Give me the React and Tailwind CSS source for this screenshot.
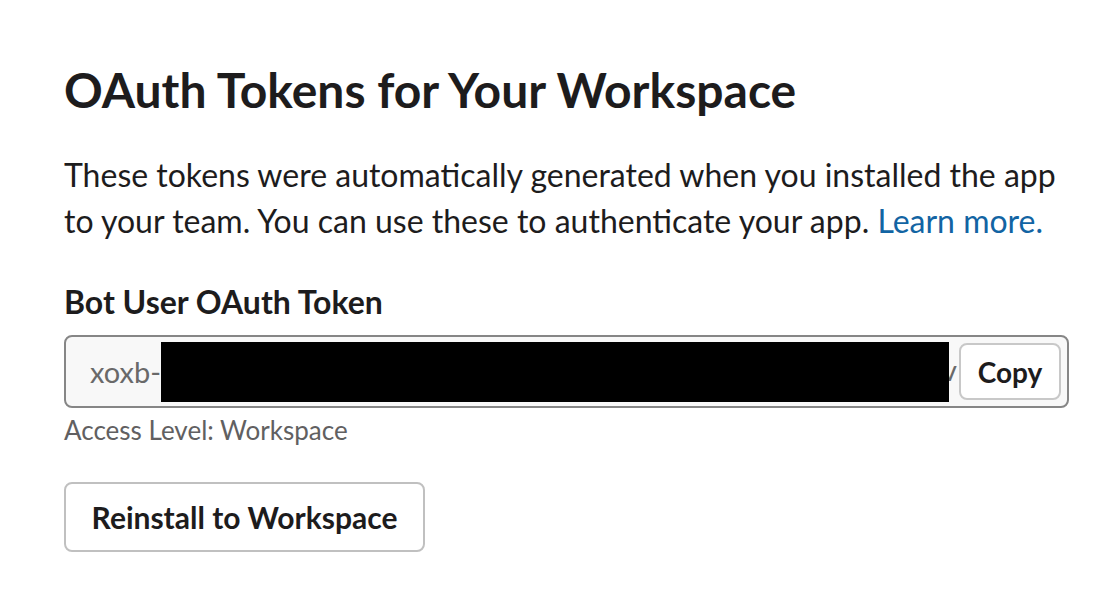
export default function App() {
  return (
    <div className="w-[1118px] h-[612px] bg-white text-[#1d1c1d] px-[64px] pt-[60px]" style={{ fontFamily: "Lato, 'Noto Sans', sans-serif" }}>
      <h1 className="text-[48px] leading-[60px] font-bold">OAuth Tokens for Your Workspace</h1>
      <p className="mt-[32px] text-[32px] leading-[46px] w-[1010px]">
        These tokens were automatically generated when you installed the app to your team. You can use these to authenticate your app. <span className="text-[#1264a3]">Learn more.</span>
      </p>
      <div className="mt-[36px] text-[32px] leading-[44px] font-bold">Bot User OAuth Token</div>
      <div className="mt-[11px] w-[1005px] h-[73px] rounded-[8px] border-2 border-[#868686] bg-[#f8f8f8] flex items-center pl-[24px] pr-[6px]">
        <span className="text-[29px] text-[#696969]">xoxb-</span>
        <div className="flex-1 relative h-[60px] overflow-hidden">
          <span className="absolute left-[781px] top-[6px] text-[29px] leading-[44px] text-[#696969]">v</span>
          <div className="absolute left-0 top-0 bottom-0 w-[788px] bg-black"></div>
        </div>
        <button className="ml-[1px] h-[57px] w-[102px] rounded-[8px] border-2 border-[#c8c8c8] bg-white text-[28px] font-bold">Copy</button>
      </div>
      <div className="mt-[4px] text-[26px] leading-[36px] text-[#616061]">Access Level: Workspace</div>
      <button className="mt-[34px] h-[70px] w-[361px] rounded-[8px] border-2 border-[#c0c0c0] bg-white text-[30px] font-bold">Reinstall to Workspace</button>
    </div>
  );
}
